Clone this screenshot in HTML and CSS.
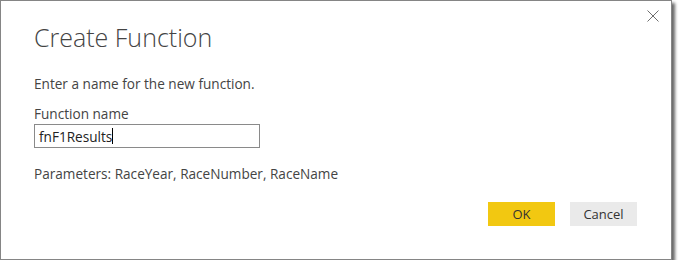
FILE: index.html
```html
<!DOCTYPE html>
<html>
<head>
<meta charset="utf-8">
<link rel="stylesheet" href="styles.css">
</head>
<body>
<div class="dialog">
  <button class="close" aria-label="Close">
    <svg width="12" height="12" viewBox="0 0 12 12"><path d="M0.5 0.5 L11.5 11.5 M11.5 0.5 L0.5 11.5" stroke="#6e6e6e" stroke-width="1" fill="none"/></svg>
  </button>
  <h1 class="title">Create Function</h1>
  <p class="intro">Enter a name for the new function.</p>
  <label class="label">Function name</label>
  <div class="input"><span class="value">fnF1Results</span><span class="caret"></span></div>
  <p class="params">Parameters: RaceYear, RaceNumber, RaceName</p>
  <div class="actions">
    <button class="btn ok">OK</button>
    <button class="btn cancel">Cancel</button>
  </div>
</div>
</body>
</html>
```
FILE: styles.css
```css
html, body {
  margin: 0;
  padding: 0;
  background: #ffffff;
}
body {
  font-family: "Open Sans", "Noto Sans", sans-serif;
  color: #444;
}
.dialog {
  position: relative;
  box-sizing: border-box;
  width: 672px;
  height: 260px;
  border: 1px solid #858585;
  background: #fff;
  box-shadow: 3px 3px 3px rgba(0,0,0,0.6);
  padding: 0 0 0 33px;
  display: flex;
  flex-direction: column;
}
.close {
  position: absolute;
  top: 8px;
  right: 11px;
  width: 14px;
  height: 14px;
  padding: 1px;
  border: 0;
  background: transparent;
  display: flex;
}
.title {
  margin: 19px 0 0 0;
  font-weight: 300;
  font-size: 25px;
  line-height: 34px;
  color: #444;
}
.intro {
  margin: 20px 0 0 0;
  font-size: 13.6px;
  line-height: 20px;
}
.label {
  margin-top: 10px;
  font-size: 13.6px;
  line-height: 19px;
}
.input {
  box-sizing: border-box;
  width: 226px;
  height: 24px;
  border: 1px solid #8a8a8a;
  margin-top: 1px;
  padding: 0 0 0 4px;
  display: flex;
  align-items: center;
  font-size: 13.6px;
  color: #222;
}
.caret {
  width: 1px;
  height: 16px;
  background: #000;
}
.params {
  margin: 16px 0 0 0;
  font-size: 13.6px;
  line-height: 20px;
}
.actions {
  display: flex;
  gap: 15px;
  margin: 18px 0 0 454px;
}
.btn {
  width: 67px;
  height: 24px;
  border: 0;
  font-family: "Open Sans", "Noto Sans", sans-serif;
  font-size: 13px;
  color: #333;
  padding: 0;
}
.ok { background: #f2c811; }
.cancel { background: #eaeaea; }
```
